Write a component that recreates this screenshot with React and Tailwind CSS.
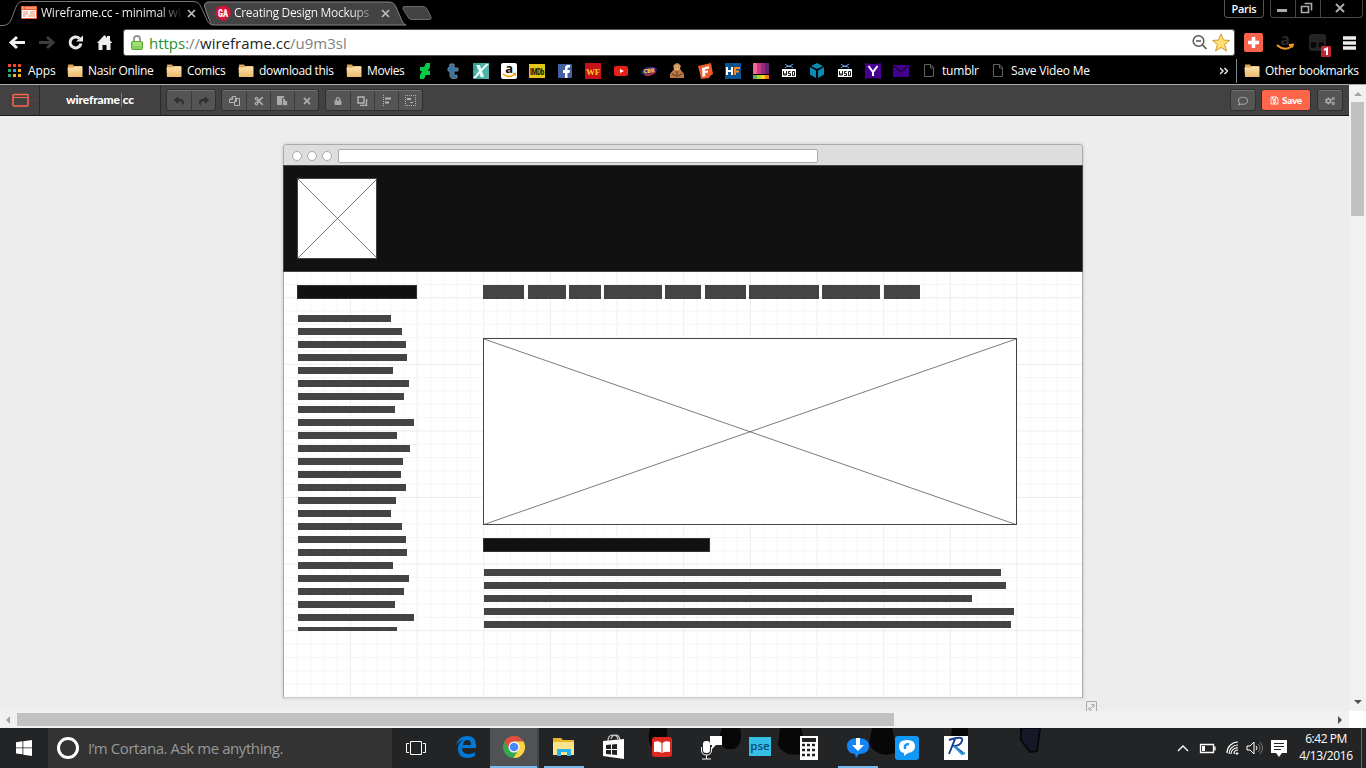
import React from "react";
import { FaReply, FaShare, FaRegCopy, FaCut, FaPaste, FaTimes, FaLock, FaRegComment, FaCogs, FaRegSave } from "react-icons/fa";

const Folder = () => (
  <svg className="h-4 w-4 shrink-0" viewBox="0 0 16 16">
    <defs>
      <linearGradient id="folder" x1="0" y1="0" x2="0" y2="1">
        <stop offset="0" stopColor="#ffe3ab" />
        <stop offset="1" stopColor="#e8b96b" />
      </linearGradient>
    </defs>
    <path d="M1 4V2Q1 1.500 1.500 1.500H6l1 1.500h7.500q.5 0 .5.5v10.500h-14z" fill="#d9a75c" />
    <path d="M0.500 4.500H6.500l1-1H15.500v10.500H1z" fill="url(#folder)" />
  </svg>
);

const Page = () => (
  <svg className="h-4 w-4 shrink-0" viewBox="0 0 16 16" fill="none" stroke="#626262">
    <path d="M3.500 1.500h6l3 3v9h-9zM9.500 1.500v3.500h3" />
  </svg>
);

const Wso = () => (
  <>
    <path d="M4 1l3 2h2l3-2M4 5l2-1.500h4L12 5" stroke="#6fa8e8" fill="none" />
    <path d="M1 6h14v8H1z" fill="#fff" />
    <path d="M2.500 8v4h3V8M4 10v2M9.500 8.500h-2v2h2v2h-2.500M11.500 8.500h2v4h-2z" stroke="#000" fill="none" strokeWidth=".9" />
  </>
);

const glyphs = [
  <path key="0" d="M9 0h4v4l-2 4h2v4H9l-2 4H3v-4l2-4H3V4h4z" fill="#05cc47" />,
  <path key="1" d="M5 1h4v4h4v3H9v3q0 2 3 1v3q-7 2-7-3V8H3V5q2-1 2-4z" fill="#2f76a8" stroke="#77818a" strokeWidth="1" />,
  <g key="2"><path d="M0 0h16v16H0z" fill="#35a39b" /><path d="M0 9 9 0h7v16H8z" fill="#62bdb3" opacity=".6" /><path d="M3 2h4l1 4L13 1h3L9 8l2 6H7.500L7 10.500 3 15H0l6-7z" fill="#e9fffb" /></g>,
  <g key="3"><rect width="16" height="16" rx="2" fill="#fff" /><text x="8" y="10" textAnchor="middle" fontFamily="Open Sans" fontWeight="700" fontSize="13" fill="#111">a</text><path d="M2 11q6 5 12 0m-2-.5 2.500 0-.5 2" stroke="#f90" strokeWidth="1.400" fill="none" /></g>,
  <g key="4"><path d="M0 1h16v14H0z" fill="#e4c617" /><text x="8" y="12" textAnchor="middle" textLength="14" lengthAdjust="spacingAndGlyphs" fontFamily="Roboto" fontWeight="900" fontSize="9.500" fill="#1b1700">IMDb</text></g>,
  <g key="5"><rect x="1" y="1" width="14" height="14" rx="1" fill="#4460a0" /><path d="M8 15v-5H6V7h2V5q0-3 3-3h2v2.500h-1.500q-1 0-1 1V7H13l-.5 3h-2v5z" fill="#fff" /></g>,
  <g key="6"><path d="M0 0h16v16H0z" fill="#c51219" /><text x="8" y="11.500" textAnchor="middle" textLength="14" lengthAdjust="spacingAndGlyphs" fontFamily="Liberation Serif" fontWeight="700" fontSize="9" fill="#ffc620">WF</text></g>,
  <g key="7"><rect x="1" y="3" width="14" height="10" rx="2" fill="#e62117" /><path d="m7 6 4 2-4 2z" fill="#fff" /></g>,
  <g key="8"><ellipse cx="8" cy="8" rx="8" ry="4" fill="#262b79" transform="rotate(-12 8 8)" /><path d="M4 12q6 1 10-3" stroke="#c92b45" strokeWidth="1.500" fill="none" /><text x="8" y="10" textAnchor="middle" fontFamily="Open Sans" fontWeight="800" fontSize="6" fill="#ffbd3a" transform="rotate(-8 8 8)">CBR</text></g>,
  <g key="9"><path d="M4 3q4-6 8 0l-1 3 4 5v4H1v-4l4-5z" fill="#b77944" /><circle cx="8" cy="4.500" r="3" fill="#e3ac73" /><path d="M6.500 4h.8M9 4h.8M3 11l4 2M13 11l-4 2M8 8v6" stroke="#57351e" /></g>,
  <g key="10"><path d="M1 3 14 0l2 11-3 2-1 2-8 1-1-5z" fill="#f0592a" /><path d="M5 5l7-2v2.500L8 6.500V8l3-.5v2L8 10l.5 3-3 1z" fill="#fff" /></g>,
  <g key="11"><path d="M0 0h16v16H0z" fill="#075291" /><path d="M2 4v8M7 4v8M2 8h5" stroke="#fff" strokeWidth="2" /><path d="M10 12V5h5M10 8.500h4" stroke="#ff8924" strokeWidth="2" fill="none" /></g>,
  <g key="12"><path d="M0 0h4v11H0z" fill="#ed679d" /><path d="M4 0h4v11H4z" fill="#ca397f" /><path d="M8 0h4v11H8z" fill="#902b83" /><path d="M12 0h4v11h-4z" fill="#63236f" /><path d="M0 12h4v4H0z" fill="#5eaf57" /><path d="M4 12h4v4H4z" fill="#b1cf32" /><path d="M8 12h4v4H8z" fill="#ffd016" /><path d="M12 12h4v4h-4z" fill="#f47a20" /></g>,
  <Wso key="13" />,
  <g key="14" fill="#088cb4"><path d="m8 0 6 3-6 3-6-3zM1 4l6 3.500V15l-6-3.500zM15 4 9 7.500V15l6-3.500z" /></g>,
  <Wso key="15" />,
  <g key="16"><path d="M0 0q8 2 16 0v16q-8-2-16 0z" fill="#490092" /><path d="m3.500 3 4.500 6 4.500-6M8 8v5" stroke="#fff" strokeWidth="2" fill="none" /></g>,
  <g key="17"><path d="M0 2h16v12H0z" fill="#42008d" /><path d="m1 3 7 6 7-6" stroke="#13002e" strokeWidth="1.200" fill="none" /></g>,
];

const Close = () => (
  <svg className="h-[9px] w-[9px]" viewBox="0 0 9 9"><path d="m1 1 7 7M8 1 1 8" stroke="#bdbdbd" strokeWidth="1.700" /></svg>
);

function TabStrip() {
  return (
    <div className="relative flex h-[28px] bg-black text-[12px] leading-[16px] text-white">
      <svg className="absolute left-0 top-0" width="440" height="28">
        <path d="M208 25Q212 24 209 19L205 8Q203 3 208 2H389Q394 2 396 7L402 21Q403 24 406 25z" fill="#434343" stroke="#858585" />
        <path d="M0 25.500H3Q9 25 11 20L16 7Q18 1.500 23 1.500H193Q199 1.500 201 7L207 20Q209 25 214 25.500V28H0z" fill="#000" />
        <path d="M0 25.500H3Q9 25 11 20L16 7Q18 1.500 23 1.500H193Q199 1.500 201 7L207 20Q209 25 214 25" fill="none" stroke="#777" />
        <path d="M405 6.500H423Q426 6.500 427 9L431 17Q432 19.500 429 19.500H412Q409 19.500 408 17L403 9Q402 6.500 405 6.500z" fill="#434343" stroke="#696969" />
      </svg>
      <div className="relative flex h-[26px] w-[207px] items-center pl-[21px]">
        <svg className="h-4 w-4 shrink-0" viewBox="0 0 16 16"><path d="M0 1h16v13H0z" fill="#f15a2b" /><path d="M1 5h14v8H1z" fill="#fff" /><path d="M1 3h2M4 3h11" stroke="#ffd6c7" /><path d="M2 7h5M2 9h5M9 7h5M9 9h5M2 11h3M7 11h7" stroke="#f58a68" /></svg>
        <span className="ml-1 w-[146px] whitespace-nowrap"><span className="inline-block bg-linear-to-r from-white from-85% to-[#222] bg-clip-text tracking-[-0.210px] text-transparent">Wireframe.cc - minimal wi</span></span>
        <Close />
      </div>
      <div className="relative flex h-[26px] w-[190px] items-center pl-[8px]">
        <svg className="h-4 w-4 shrink-0" viewBox="0 0 16 16"><circle cx="8" cy="8" r="6.500" fill="#e5103e" /><circle cx="8" cy="8" r="7" fill="none" stroke="#e5103e" strokeWidth="2" strokeDasharray="1.500 1.250" /><text x="8" y="11.500" textAnchor="middle" textLength="10" lengthAdjust="spacingAndGlyphs" fontFamily="Roboto" fontWeight="900" fontSize="10" fill="#fff">GA</text></svg>
        <span className="ml-[3px] w-[147px] whitespace-nowrap"><span className="inline-block bg-linear-to-r from-white from-87% to-[#888] bg-clip-text tracking-[-0.300px] text-transparent">Creating Design Mockups</span></span>
        <Close />
      </div>
      <div className="ml-auto flex h-[18px] items-start">
        <span className="mr-[6px] flex h-[18px] w-[40px] items-center justify-center rounded-b border border-t-0 border-[#555] text-[11px] font-semibold tracking-[-0.300px]">Paris</span>
        <div className="mr-[3px] flex h-[18px] w-[93px] rounded-b border border-t-0 border-[#484848]">
          <svg width="91" height="17" fill="none" stroke="#aaa"><path d="M24.500 0v17M49.500 0v17" stroke="#484848" /><path d="M6 10.500h10" strokeWidth="3" /><path d="M33.500 3.500h7v7M30.500 6.500h7v6h-7z" strokeWidth="1.600" /><path d="m65 4 8 8M73 4l-8 8" strokeWidth="2" /></svg>
        </div>
      </div>
    </div>
  );
}

function AddressBar() {
  return (
    <div className="flex h-[29px] items-center bg-black">
      <svg className="shrink-0" width="123" height="29" fill="none">
        <path d="M11 14.500h14M17 9l-6 5.500 6 5.500" stroke="#eee" strokeWidth="3" />
        <path d="M39 14.500h13M47 9l6 5.500-6 5.500" stroke="#3d3d3d" strokeWidth="3" />
        <path d="M79.500 10.500a5.500 5.500 0 1 0 1.500 5" stroke="#e8e8e8" strokeWidth="3" /><path d="M83 7.500v6h-7z" fill="#e8e8e8" />
        <path d="m97 15 7.500-8 2.500 3V8h3v4.500l2.500 2.500h-2v7h-4v-5h-4v5h-4v-7z" fill="#eee" />
      </svg>
      <div className="flex h-[27px] w-[1112px] items-center rounded-[3px] border border-[#555] bg-white pl-[7px] pr-[4px]">
        <svg width="12" height="16" viewBox="0 0 12 16"><path d="M3 7V4q0-3 3-3t3 3v3" stroke="#8f958b" strokeWidth="1.800" fill="none" /><rect x=".5" y="6.500" width="11" height="8" rx="1" fill="#8bd05c" stroke="#5da833" /><path d="M2 8h8M2 10h8" stroke="#b6eb91" /></svg>
        <span className="ml-[6px] whitespace-nowrap text-[15px] leading-[20px] tracking-[-0.010px] text-[#808080]"><span className="text-[#22922b]">https</span>://<span className="text-[#222]">wireframe.cc</span>/u9m3sl</span>
        <svg className="ml-auto" width="39" height="20" fill="none"><circle cx="7.500" cy="8" r="5.300" stroke="#555" strokeWidth="1.500" /><path d="M5 8h5M11.500 12l4 4" stroke="#555" strokeWidth="1.700" /><path d="m30 1 2.500 6 6 .5-5 4 2 6.500-5.500-3.500-5.500 3.500 2-6.500-5-4 6-.5z" fill="#ffe071" stroke="#c89a31" /></svg>
      </div>
      <svg width="131" height="29" fill="none">
        <rect x="9" y="5" width="19" height="19" rx="2" fill="#f9634c" /><path d="M18.500 9v11M13 14.500h11" stroke="#fff" strokeWidth="3.500" />
        <text x="50" y="17" textAnchor="middle" fontFamily="Open Sans" fontWeight="700" fontSize="16" fill="#292929">a</text>
        <path d="M42 17q8 7 15 1m-3-1 4-.5-1 3" stroke="#f29a20" strokeWidth="1.800" />
        <rect x="74" y="6" width="17" height="17" rx="3" fill="#242424" /><circle cx="78.500" cy="17" r="3" fill="#080808" /><circle cx="86.500" cy="17" r="3" fill="#080808" />
        <rect x="86" y="18" width="10" height="11" rx="1" fill="#bd2632" /><path d="m89 22 3-1.500V27" stroke="#fff" strokeWidth="2" />
        <path d="M108 10h13M108 15h13M108 20h13" stroke="#eee" strokeWidth="3.400" />
      </svg>
    </div>
  );
}

const folders = [["Nasir Online", "w-[99px]"], ["Comics", "w-[72px]"], ["download this", "w-[108px]"], ["Movies", "w-[69px]"]];

function Bookmarks() {
  return (
    <div className="flex h-[28px] items-center border-b border-[#aaa] bg-black text-[12px] tracking-[-0.330px] text-white">
      <div className="flex w-[59px] shrink-0 items-center gap-[7px] whitespace-nowrap">
        <svg className="ml-[7px] shrink-0" width="14" height="14"><path d="M1 0h3v3H1zM6 0h3v3H6zM11 0h3v3h-3z" fill="#f44336" /><path d="M1 5h3v3H1zM1 10h3v3H1z" fill="#2fa860" /><path d="M6 5h3v3H6z" fill="#3b9cf4" /><path d="M6 10h3v3H6zM11 5h3v3h-3zM11 10h3v3h-3z" fill="#f8b51d" /></svg>
        <span className="tracking-[-0.100px]">Apps</span>
      </div>
      <div className="flex w-[352px] shrink-0 pl-[8px]">
        {folders.map(([name, width]) => (
          <div key={name} className={`flex shrink-0 items-center gap-[5px] whitespace-nowrap ${width}`}><Folder /><span>{name}</span></div>
        ))}
      </div>
      <div className="flex shrink-0">
        {glyphs.map((glyph, i) => <div key={i} className="flex w-[28px] justify-center"><svg className="h-4 w-4" viewBox="0 0 16 16">{glyph}</svg></div>)}
      </div>
      <div className="ml-[6px] flex w-[69px] items-center gap-[5px] tracking-[-0.200px]"><Page /><span>tumblr</span></div>
      <div className="flex items-center gap-[5px] whitespace-nowrap tracking-[-0.180px]"><Page /><span>Save Video Me</span></div>
      <svg className="ml-auto mr-[8px] shrink-0" width="8" height="8" fill="none" stroke="#eee" strokeWidth="1.500"><path d="m0 1 3 3-3 3M4.500 1l3 3-3 3" /></svg>
      <div className="flex h-[24px] w-[130px] shrink-0 items-center gap-[5px] whitespace-nowrap border-l border-[#7e8998] pl-[7px]"><Folder /><span>Other bookmarks</span></div>
    </div>
  );
}

const Tool = ({ children }) => <div className="flex w-[24px] items-center justify-center border-l border-[#3a3a3a] first:border-l-0">{children}</div>;
const Group = ({ children, className }) => <div className={`flex h-[20px] rounded-[2px] border-t border-[#707070] bg-[#555] text-[10px] text-[#aaa] shadow-[0_0_0_1px_#303030] ${className}`}>{children}</div>;

function AppToolbar() {
  return (
    <div className="flex h-[31px] items-center border-b border-[#191919] bg-[#424242]">
      <div className="flex h-full w-[40px] items-center border-r border-[#292929] pl-[11px]">
        <svg width="26" height="14" fill="none"><rect x="2" y="1.500" width="15" height="11.500" rx="1" stroke="#ff6549" strokeWidth="1.500" /><path d="M2 4.500h15" stroke="#ff6549" /><path d="m22.500 6 3 2-3 2z" fill="#7d3b32" /></svg>
      </div>
      <div className="flex h-full w-[121px] items-center justify-center border-r border-[#292929] font-[Lato] text-[12px] font-black tracking-[-0.150px] text-white"><span>wireframe</span><i className="mx-px h-[14px] w-px shrink-0 bg-[#ff4a35]" /><span>cc</span></div>
      <Group className="ml-[6px]"><Tool><FaReply className="text-[#303030]" /></Tool><Tool><FaShare className="text-[#303030]" /></Tool></Group>
      <Group className="ml-[7px]">
        <Tool><svg width="11" height="10" fill="#555" stroke="#b4b4b4"><path d="M3.500.5h3v6h-6v-3zM.5 3.500h3v-3" /><path d="M7.500 2.500h3v7h-5v-4zM5.500 5.500h2v-3" /></svg></Tool>
        <Tool><FaCut /></Tool>
        <Tool><svg width="11" height="10"><path d="M0 0h7v2H5v7H0z" fill="#aaa" /><path d="M5.500 2.500h3l2 2v5h-5z" fill="#aaa" stroke="#606060" /><path d="M8.500 2.500v2h2" stroke="#444" fill="none" /></svg></Tool>
        <Tool><FaTimes /></Tool>
      </Group>
      <Group className="ml-[8px]">
        <Tool><FaLock className="text-[8px]" /></Tool>
        <Tool><svg width="11" height="10" fill="none" stroke="#b4b4b4"><path d="M1 1h6v6H1zM9.500 3v6.500H3" strokeWidth="1.400" /></svg></Tool>
        <Tool><svg width="10" height="11" stroke="#b4b4b4"><path d="M1.500 0v11" strokeDasharray="1 1" /><path d="M3 3.500h6M3 7.500h4" strokeWidth="2" /></svg></Tool>
        <Tool><svg width="11" height="11" fill="none" stroke="#b4b4b4"><path d="M0 .5h11M0 10.500h11M.5 2v8M10.500 2v8" strokeDasharray="1 1" /><path d="M2 4h4" strokeWidth="2" /><path d="M5 7.500h3" /></svg></Tool>
      </Group>
      <Group className="ml-auto mr-[7px]"><Tool><FaRegComment /></Tool></Group>
      <button className="flex h-[20px] w-[48px] items-center justify-center gap-[3px] rounded-[2px] bg-[#ff6549] font-[Lato] text-[10px] font-black tracking-[-0.300px] text-white shadow-[0_0_0_1px_#303030]"><FaRegSave className="text-[9px]" />Save</button>
      <Group className="ml-[8px] mr-[7px]"><Tool><FaCogs /></Tool></Group>
    </div>
  );
}

const sideWidths = [93, 104, 108, 109, 95, 111, 106, 97, 116, 99, 112, 105, 103, 108, 98, 93, 104, 108, 109, 95, 111, 106, 97, 116, 99];
const navSegments = [[0, 41], [45, 38], [86, 32], [121, 58], [182, 36], [222, 41], [266, 70], [339, 58], [401, 36]];

function Wireframe() {
  return (
    <div className="relative ml-[283px] mt-[28px] h-[554px] w-[800px] rounded-t-[4px] border border-[#aaa] border-b-[#ccc] bg-white shadow-[0_0_3px_1px_#d4d4d4]">
      <div className="flex h-[20px] items-center rounded-t-[3px] bg-[#ddd] pl-[8px]">
        <div className="flex gap-[5px] pt-px">{[0, 1, 2].map(i => <i key={i} className="h-[10px] w-[10px] rounded-full border border-[#aaa] bg-white" />)}</div>
        <div className="ml-[6px] mt-[2px] h-[14px] w-[480px] rounded-[2px] border border-[#aaa] bg-white" />
      </div>
      <svg className="block" width="798" height="532">
        {Array.from({ length: 59 }, (_, i) => <path key={`v${i}`} d={`M${(i + 1) * 13.33 - 0.2} 107V531`} stroke={i % 5 === 4 ? "#eeeeee" : "#f5f5f5"} />)}
        {Array.from({ length: 32 }, (_, i) => <path key={`h${i}`} d={`M0 ${(i + 1) * 13.32 + 106.1}H798`} stroke={i % 5 === 1 ? "#ececec" : "#f5f5f5"} />)}
      </svg>
      <div className="absolute -left-px top-[20px] h-[107px] w-[800px] border border-[#444] bg-[#111]">
        <svg className="absolute left-[13px] top-[12px]" width="80" height="81" fill="#fff" stroke="#444"><rect x=".5" y=".5" width="79" height="80" /><path d="m1 1 79 79M1 80 80 1" strokeWidth=".7" /></svg>
      </div>
      <div className="absolute left-[13px] top-[140px] h-[14px] w-[120px] border border-[#333] bg-[#111]" />
      <div className="absolute left-[14px] top-[170px] flex h-[316px] flex-col gap-[6px] overflow-hidden">
        {sideWidths.map((width, i) => <div key={i} className="h-[7px] shrink-0 bg-[#444]" style={{ width }} />)}
      </div>
      {navSegments.map(([left, width]) => <div key={left} className="absolute top-[140px] h-[14px] bg-[#444]" style={{ left: 199 + left, width }} />)}
      <svg className="absolute left-[199px] top-[193px]" width="534" height="187" fill="#fff" stroke="#444"><rect x=".5" y=".5" width="533" height="186" /><path d="m1 1 532 185.500M1 186.500 533 1" strokeWidth=".7" /></svg>
      <div className="absolute left-[199px] top-[393px] h-[14px] w-[227px] border border-[#333] bg-[#111]" />
      <div className="absolute left-[200px] top-[424px] flex flex-col gap-[6px]">
        {[517, 522, 488, 530, 527].map(width => <div key={width} className="h-[7px] bg-[#444]" style={{ width }} />)}
      </div>
    </div>
  );
}

const apps = [
  <path key="edge" d="M6 15Q8 5 17 5q9 0 9 9v3H12q0 6 7 6 4 0 6-2v4q-3 2-7 2-10 0-10-9 0-6 5-9-5 1-7 6zm7-1h8q0-5-4-5-3 0-4 5z" fill="#0078d7" />,
  <g key="chrome"><circle cx="16" cy="16" r="11" fill="#37a852" /><path d="M6.500 10.500A11 11 0 0 1 25.500 10.500H16L12 19z" fill="#e34b3e" /><path d="M16 10.500h9.500A11 11 0 0 1 15.500 27L21 18z" fill="#ffd147" /><circle cx="16" cy="16" r="5.500" fill="#fff" /><circle cx="16" cy="16" r="4.300" fill="#4788f4" /></g>,
  <g key="files"><path d="M5 7h8l2 2h11v15H5z" fill="#e8b62f" /><path d="M5 11h21v13H5z" fill="#fbe28b" /><path d="M9 25v-7h14v7h-4v-4h-6v4z" fill="#25b4ea" /></g>,
  <g key="store"><path d="M11 10q0-6 5-6 4 0 5 4M14 8q1-4 5-4 3 0 4 5" fill="none" stroke="#ccc" strokeWidth="1.200" /><path d="m6 10 21-2v20L6 25z" fill="#fff" /><path d="m9 14 5-.5v4.500H9zM15 13.500l5-.5v5h-5zM9 19h5v4.500L9 23zM15 19h5v5l-5-.5z" fill="#222" /></g>,
  <g key="book"><rect x="6" y="6" width="20" height="20" rx="3" fill="#dd2720" /><path d="M8 11q5-2 7.500 1v10q-3-2-7.500-1zM24 11q-5-2-7.500 1v10q3-2 7.500-1z" fill="#fff" /></g>,
  <g key="voice"><rect x="8" y="10" width="7" height="12" rx="3" fill="#fff" /><path d="M6.500 16v3q0 5 5 5t5-5v-3M11.500 24v4M7 28h9" stroke="#fff" fill="none" /><path d="M15 5h12v9h-6l-4 4v-4h-2z" fill="#fff" /></g>,
  <g key="pse"><path d="M5 6h22v19H5z" fill="#36bfe5" /><text x="16" y="19" textAnchor="middle" fontFamily="Open Sans" fontSize="11.500" fontWeight="600" fill="#064b75">pse</text></g>,
  <g key="calc"><path d="M7 5h18v24H7z" fill="#fff" /><path d="M9 7h14v4H9z" fill="#222" /><path d="M9 14h3M14 14h3M19 14h3M9 19h3M14 19h3M19 19h3M9 24h3M14 24h3M19 24h3" stroke="#222" strokeWidth="2.500" /></g>,
  <g key="download"><path d="M5 15q0-8 11-8t11 8-10 8l-3 4-1-4q-8-1-8-8z" fill="#1485f5" /><path d="M14 7h4v7h4l-6 6-6-6h4z" fill="#fff" /></g>,
  <g key="chat"><rect x="4" y="5" width="24" height="24" rx="3" fill="#1197f5" /><path d="M8 15q0-6 8-6t8 6-7 7l-4 3v-3q-5-1-5-7z" fill="#fff" /><path d="M14 18v-3q1-2 4-2" stroke="#1197f5" strokeWidth="2.500" fill="none" /></g>,
  <g key="r"><path d="M4 5h24v24H4z" fill="#fff" /><path d="M9 9q15-5 13 1-2 5-8 5l9 7M15 8 9 23" stroke="#173f95" strokeWidth="2" fill="none" /><path d="m14 15 8 8 3-1" stroke="#2798dd" strokeWidth="2" fill="none" /></g>,
];

function Taskbar() {
  return (
    <div className="relative flex h-[40px] items-center bg-[#222426] text-white">
      <svg className="absolute left-0 top-0" width="1366" height="40"><path d="M650 0h17v8l-12 14q-9-5-5-22zM722 0h18q4 16-6 21h-8q-10-5-4-21zM780 0h21q4 15 4 25-20 6-27-8zM872 0h20q4 15 3 25-17 6-26-9zM952 0h16v26l-18-3z" fill="#070708" /><path d="M1021 0h19l-3 23-7 1-9-12z" fill="#141827" stroke="#08080a" strokeWidth="2" /></svg>
      <div className="flex w-[48px] justify-center"><svg width="16" height="16" viewBox="0 0 16 16"><path d="M0 2.200 6.500 1.300V7.400H0zM7.300 1.200 16 0v7.400H7.300zM0 8.200h6.500v6.100L0 13.500zM7.300 8.200H16V16l-8.700-1.200z" fill="#fff" /></svg></div>
      <div className="relative flex h-full w-[344px] items-center bg-[#333] pl-[9px]">
        <i className="h-[22px] w-[22px] rounded-full border-[3px] border-white" />
        <span className="ml-[9px] whitespace-nowrap text-[15px] tracking-[-0.430px] text-[#999]">I’m Cortana. Ask me anything.</span>
      </div>
      <div className="flex w-[49px] justify-center pr-[2px]"><svg width="20" height="15" fill="none" stroke="#fff"><path d="M4.500.5h11v13h-11zM3 2.500H.5v9H3M17 2.500h2.500v9H17" /></svg></div>
      <div className="relative flex h-full">
        {apps.map((icon, i) => (
          <div key={i} className={`flex h-full w-[49px] flex-col items-center justify-between ${i === 1 ? "border-r-2 border-[#424446] bg-[#505254]" : ""}`}>
            <svg className="mt-[3px]" width="32" height="32" viewBox="0 0 32 32">{icon}</svg>
            {[1, 2, 8].includes(i) && <i className={`h-[2px] bg-[#76b9ed] ${i === 1 ? "w-full" : "w-[40px]"}`} />}
          </div>
        ))}
      </div>
      <svg className="ml-auto" width="118" height="24" fill="none" stroke="#fff">
        <path d="m5 15 5-5 5 5" strokeWidth="1.300" />
        <path d="M27.500 8.500h13v8h-13zM42 10.500v4" strokeWidth="1.300" /><path d="M29 10h3v5h-3z" fill="#fff" stroke="none" />
        <path d="M54 17A11 11 0 0 1 65 6M56 18a9 9 0 0 1 9-9M58 18a6 6 0 0 1 7-6M61 18q0-4 4-4" strokeWidth="1.200" /><path d="M63 17h2v1h-2z" />
        <path d="M74 10h3l4-4v12l-4-4h-3zM83 10q2 2 0 4" /><path d="M85 8q4 4 0 8M87 6q5 6 0 12" stroke="#777" />
        <path d="M98 4h16v13h-5l-3 4-3-4h-5z" fill="#fff" stroke="none" /><path d="M101 7.500h10M101 10.500h10M101 13.500h7" stroke="#222" />
      </svg>
      <div className="relative flex w-[70px] flex-col items-center whitespace-nowrap pb-[2px] text-[12px] leading-[17px] tracking-[-0.450px]"><span>6:42 PM</span><span className="tracking-[-0.350px]">4/13/2016</span></div>
      <i className="mr-[4px] h-full w-px bg-[#666]" />
    </div>
  );
}

const Arrow = ({ d, fill = "#505050" }) => <svg className="shrink-0" width="17" height="17"><path d={d} fill={fill} /></svg>;

export default function App() {
  return (
    <div className="flex h-[768px] w-[1366px] flex-col overflow-hidden font-['Open_Sans','Noto_Sans',sans-serif]">
      <TabStrip />
      <AddressBar />
      <Bookmarks />
      <div className="flex h-[626px] shrink-0">
        <div className="flex w-[1349px] flex-col">
          <AppToolbar />
          <main className="h-[595px] overflow-hidden bg-[#ededed]">
            <Wireframe />
            <svg className="ml-[1086px] mt-[3px]" width="12" height="11" fill="none" stroke="#aaa"><path d="M.5 11V.5h10V11M3 9l5-5M5 3.500h3v3M3 6v3h3" /></svg>
          </main>
        </div>
        <div className="flex w-[17px] flex-col items-center justify-between bg-[#f1f1f1]">
          <div><Arrow d="m5 11 4-4 4 4z" fill="#a3a3a3" /><div className="ml-[2px] h-[114px] w-[13px] bg-[#c1c1c1]" /></div>
          <Arrow d="m5 6 4 4 4-4z" />
        </div>
      </div>
      <div className="flex h-[17px] shrink-0 bg-white">
        <div className="flex w-[1349px] items-center bg-[#f1f1f1]">
          <Arrow d="m10 5-4 4 4 4z" fill="#a3a3a3" /><div className="h-[13px] w-[877px] bg-[#c1c1c1]" /><span className="ml-auto"><Arrow d="m6 5 4 4-4 4z" /></span>
        </div>
      </div>
      <Taskbar />
    </div>
  );
}
